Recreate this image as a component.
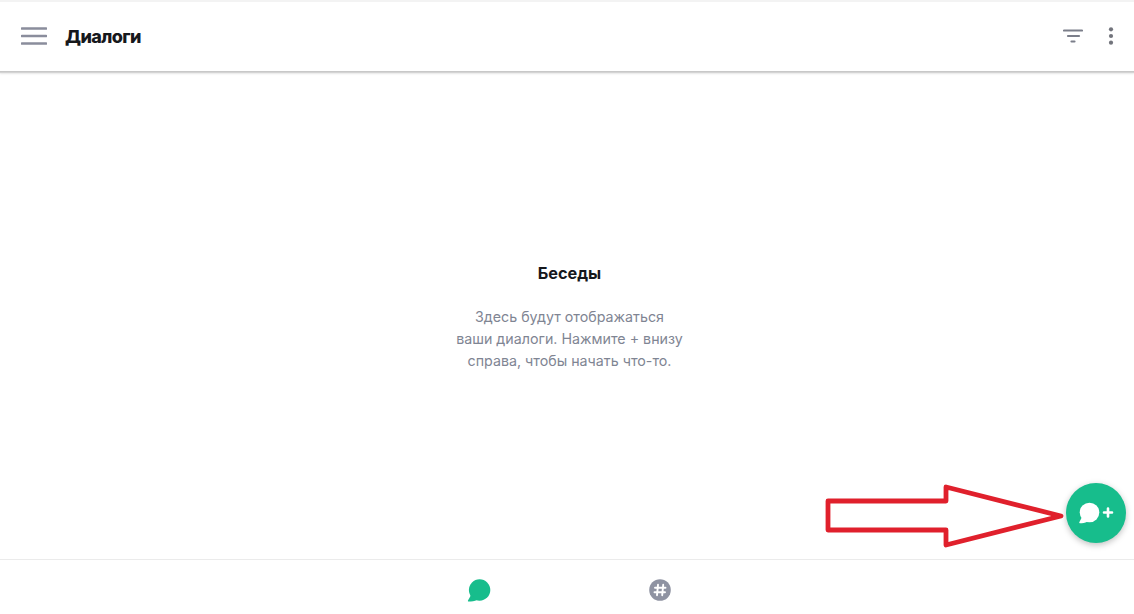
<div class="app">
  <header class="topbar">
    <div class="left">
      <svg class="menu" width="26" height="20" viewBox="0 0 26 20" aria-hidden="true">
        <path d="M1 2.500h24M1 10h24M1 17.500h24" stroke="#8a8d9c" stroke-width="2.600" stroke-linecap="round" fill="none" />
      </svg>
      <h1>Диалоги</h1>
    </div>
    <div class="right">
      <svg width="20" height="14" viewBox="0 0 20 14" aria-hidden="true">
        <path d="M1 1.500h18M5 7h11M8.500 12.500h3" stroke="#7b7e8a" stroke-width="2.200" stroke-linecap="round" fill="none" />
      </svg>
      <svg width="6" height="18" viewBox="0 0 6 18" aria-hidden="true">
        <circle cx="3" cy="2.300" r="2.100" fill="#72747c" />
        <circle cx="3" cy="9" r="2.100" fill="#72747c" />
        <circle cx="3" cy="15.700" r="2.100" fill="#72747c" />
      </svg>
    </div>
  </header>

  <main class="content">
    <h2>Беседы</h2>
    <p>Здесь будут отображаться<br />ваши диалоги. Нажмите + внизу<br />справа, чтобы начать что-то.</p>
  </main>

  <nav class="tabs">
    <svg width="24" height="23" viewBox="0 0 24 23" aria-hidden="true">
      <circle cx="12.600" cy="11" r="10.700" fill="#17bd8c" />
      <path d="M4 16 1 21.500c-.3.600 0 1 .6 1 3 0 6-.5 8.500-1.500Z" fill="#17bd8c" />
    </svg>
    <svg width="22" height="22" viewBox="0 0 22 22" aria-hidden="true">
      <circle cx="11" cy="11" r="10.800" fill="#8f93a2" />
      <path d="M9 5.800 8 16.200M14.200 5.800l-1 10.400M6 8.800h10.500M5.500 13.200h10.500" stroke="#fff" stroke-width="1.900" stroke-linecap="round" fill="none" />
    </svg>
  </nav>

  <svg class="arrow" width="240" height="64" viewBox="0 0 240 64" aria-hidden="true">
    <path d="M3 17H121V3L236 32 121 61V46H3Z" fill="#fff" stroke="#e0202c" stroke-width="4.800" stroke-linejoin="round" />
  </svg>

  <button class="fab" aria-label="Новый диалог">
    <svg width="36" height="24" viewBox="0 0 36 24" aria-hidden="true">
      <circle cx="11.500" cy="11.500" r="9.800" fill="#fff" />
      <path d="M4 16 1.300 21.300c-.3.500 0 .9.500.9 2.700 0 5.200-.5 7.400-1.500Z" fill="#fff" />
      <path d="M30 7.500v8M26 11.500h8" stroke="#fff" stroke-width="2.600" stroke-linecap="round" fill="none" />
    </svg>
  </button>
</div>

<style>
  :global(body) {
    margin: 0;
    background: #fff;
  }
  .app {
    position: relative;
    width: 1134px;
    height: 614px;
    overflow: hidden;
    display: flex;
    flex-direction: column;
    font-family: Inter, "Noto Sans", sans-serif;
    background: #fff;
  }
  .topbar {
    height: 71px;
    flex: none;
    padding: 0 20.500px 1px 21px;
    display: flex;
    align-items: center;
    justify-content: space-between;
    border-top: 2px solid #f3f3f3;
    box-shadow: 0 1px 0 #c8c8c8, 0 2px 1px #d4d4d4, 0 3px 2px #ececec;
    box-sizing: border-box;
    position: relative;
  }
  .left {
    display: flex;
    align-items: center;
    gap: 18px;
  }
  h1 {
    margin: 0;
    font-size: 18px;
    font-weight: 800;
    color: #16181c;
    letter-spacing: -0.6px;
  }
  .right {
    display: flex;
    align-items: center;
    gap: 24.500px;
  }
  .content {
    flex: 1;
    display: flex;
    flex-direction: column;
    align-items: center;
    padding-top: 191px;
    padding-left: 5px;
    box-sizing: border-box;
  }
  h2 {
    margin: 0 0 22px;
    font-size: 16.300px;
    line-height: 22px;
    font-weight: 700;
    color: #16181c;
  }
  p {
    margin: 0;
    font-size: 14.250px;
    line-height: 22px;
    text-align: center;
    color: #7f8593;
  }
  .tabs {
    height: 55px;
    flex: none;
    border-top: 1px solid #ebebeb;
    display: flex;
    justify-content: center;
    align-items: flex-start;
    gap: 158px;
    padding-top: 19px;
    padding-left: 4px;
    box-sizing: border-box;
  }
  .arrow {
    position: absolute;
    left: 825px;
    top: 484px;
  }
  .fab {
    position: absolute;
    left: 1066px;
    top: 483px;
    width: 60px;
    height: 60px;
    border: none;
    padding: 0;
    border-radius: 50%;
    background: #17bd8c;
    box-shadow: 0 2px 6px rgba(0, 0, 0, 0.25);
    display: flex;
    align-items: center;
    justify-content: center;
  }
</style>
